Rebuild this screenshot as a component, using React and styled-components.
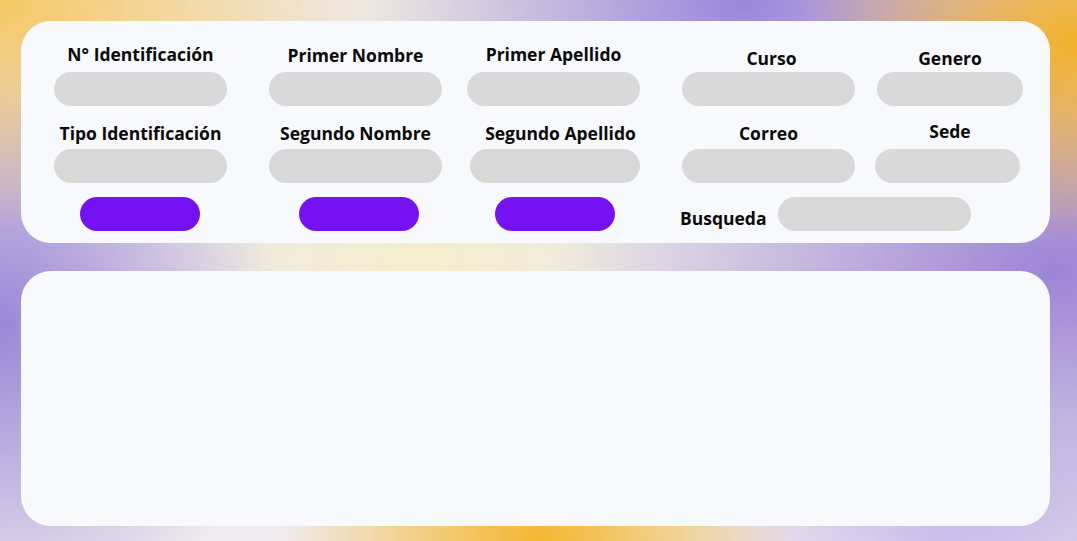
import React from 'react'
import styled, { createGlobalStyle } from 'styled-components'

const GlobalStyle = createGlobalStyle`
  html, body {
    margin: 0;
    padding: 0;
  }
  body {
    font-family: 'Open Sans', 'Noto Sans', sans-serif;
    color: #0a0a0a;
  }
`

const Page = styled.div`
  width: 1077px;
  height: 541px;
  overflow: hidden;
  padding: 21px 27px 15px 21px;
  box-sizing: border-box;
  display: flex;
  flex-direction: column;
  gap: 28px;
  background:
    radial-gradient(260px 190px at 50% 100%, #f4b62e 0%, rgba(244, 182, 46, 0) 100%),
    radial-gradient(280px 200px at 100% 8%, #f4b22a 0%, rgba(244, 178, 42, 0) 100%),
    radial-gradient(360px 230px at 0% 0%, #f6c864 0%, rgba(246, 200, 100, 0) 100%),
    radial-gradient(380px 240px at 69% 0%, #9a85dc 0%, rgba(154, 133, 220, 0) 100%),
    radial-gradient(500px 320px at 98% 50%, #9c84d6 0%, rgba(156, 132, 214, 0) 100%),
    radial-gradient(280px 320px at 0% 60%, #9b86d8 0%, rgba(155, 134, 216, 0) 100%),
    radial-gradient(280px 140px at 88% 100%, #d2c6ee 0%, rgba(210, 198, 238, 0) 100%),
    radial-gradient(240px 140px at 39% 48%, #f4eecb 0%, rgba(244, 238, 203, 0) 100%),
    linear-gradient(180deg, #efe7e0 0%, #efebee 100%);
`

const Card = styled.section`
  width: 1029px;
  height: ${(p) => p.$h}px;
  box-sizing: border-box;
  background: #f8f9fd;
  border-radius: 30px;
  flex-shrink: 0;
`

const Form = styled(Card)`
  display: grid;
  grid-template-columns: 215px 198px 215px 195px 146px;
  grid-template-rows: 51px 34px 43px 34px 48px;
  padding: 0 0 12px 33px;
`

const Label = styled.div`
  font-size: 17.5px;
  font-weight: 700;
  line-height: 22px;
  text-align: center;
  width: ${(p) => p.$w || 173}px;
  align-self: end;
  margin-bottom: ${(p) => p.$mb}px;
  margin-left: ${(p) => p.$dx || 0}px;
  white-space: nowrap;
`

const Input = styled.div`
  width: ${(p) => p.$w || 173}px;
  height: 34px;
  border-radius: 17px;
  background: #d9d9d9;
  margin-left: ${(p) => p.$dx || 0}px;
`

const Button = styled.button`
  width: 120px;
  height: 34px;
  border: none;
  border-radius: 17px;
  background: #7412f3;
  align-self: end;
  margin-left: ${(p) => p.$dx}px;
  padding: 0;
`

const Search = styled.div`
  grid-column: 4 / 6;
  align-self: end;
  display: flex;
  align-items: center;
  gap: 11px;
  margin-left: -2px;
`

const SearchLabel = styled.span`
  font-size: 17.5px;
  font-weight: 700;
  line-height: 22px;
  margin-top: 8px;
`

const Results = styled(Card)``

export default function App() {
  return (
    <>
      <GlobalStyle />
      <Page>
        <Form $h={222}>
          <Label $mb={7}>N° Identificación</Label>
          <Label $mb={6}>Primer Nombre</Label>
          <Label $mb={7}>Primer Apellido</Label>
          <Label $mb={3} $dx={3}>Curso</Label>
          <Label $mb={3} $w={146}>Genero</Label>

          <Input />
          <Input />
          <Input />
          <Input />
          <Input $w={146} />

          <Label $mb={5}>Tipo Identificación</Label>
          <Label $mb={5}>Segundo Nombre</Label>
          <Label $mb={5} $dx={7}>Segundo Apellido</Label>
          <Label $mb={5}>Correo</Label>
          <Label $mb={7} $w={146}>Sede</Label>

          <Input />
          <Input />
          <Input $dx={3} $w={170} />
          <Input />
          <Input $dx={-2} $w={145} />

          <Button $dx={26} />
          <Button $dx={30} />
          <Button $dx={28} />
          <Search>
            <SearchLabel>Busqueda</SearchLabel>
            <Input $w={193} />
          </Search>
        </Form>
        <Results $h={255} />
      </Page>
    </>
  )
}
